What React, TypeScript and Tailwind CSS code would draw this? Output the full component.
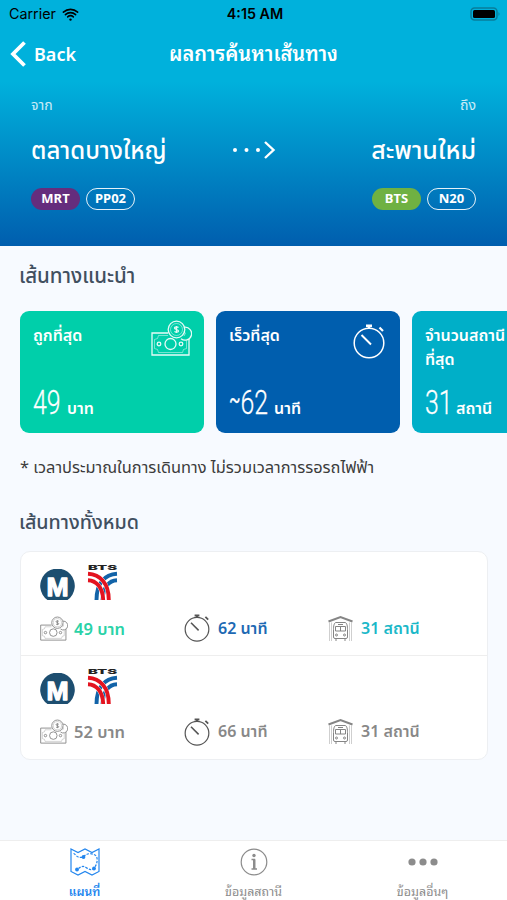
import React from "react";
import { IoWifi } from "react-icons/io5";

type IconProps = { className?: string };

const MoneyIcon = ({ className }: IconProps) => (
    <svg viewBox="0 0 41 36" fill="none" stroke="currentColor" strokeWidth={1.3} className={className}>
        <path d="M17 13H1v22h37V19" />
        <path d="M17 15.500H7.500a4 4 0 0 1-4 4v9a4 4 0 0 1 4 4h24a4 4 0 0 1 4-4v-8" strokeWidth={0.5} />
        <circle cx="19.500" cy="24" r="5.500" />
        <circle cx="8" cy="24" r="1.800" />
        <circle cx="30" cy="24" r="1.800" />
        <circle cx="25.500" cy="9.500" r="8.300" />
        <circle cx="25.500" cy="9.500" r="6" strokeWidth={0.5} />
        <path d="M33.500 7.200a6.500 6.500 0 1 1-3.500 11.500" />
        <path d="M33 11a3.500 3.500 0 0 1 0 5" strokeWidth={0.6} />
        <path d="M27.500 7.500c-1-1-4-1-4 .5s4 1.500 4 3-3 1.600-4 .4M25.500 6v7" />
    </svg>
);

const StopwatchIcon = ({ className }: IconProps) => (
    <svg viewBox="0 0 32 35" fill="none" stroke="currentColor" strokeWidth={1.5} className={className}>
        <circle cx="16" cy="19" r="14.800" />
        <path d="M13 1.800h6M16 1v3.500" strokeWidth={2.600} />
        <path d="m26.500 3.500 3.500 3.500" strokeWidth={2.200} />
        <path d="m8.500 11 9.500 9.500" strokeWidth={1.900} />
    </svg>
);

const StationIcon = ({ className }: IconProps) => (
    <svg viewBox="0 0 25 27" fill="none" stroke="currentColor" strokeWidth={1} className={className}>
        <path d="M0.500 6.500 12.500 2 24.500 6.500" strokeWidth={2} />
        <path d="M1.500 7.500V26M3.500 7.500V26M21.500 7.500V26M23.500 7.500V26" strokeWidth={0.4} />
        <path d="M8 7.500h9c2 0 2.500 4 2.500 7v7.500q0 1.500-1.500 1.500H7q-1.500 0-1.500-1.500v-7.500c0-3 .5-7 2.500-7Z" />
        <path d="M10 9.500h5M7.500 11.500h10V16h-10zM12.500 11.500V16M8 24v2M17 24v2" />
        <circle cx="8.500" cy="20" r="1" />
        <circle cx="16.500" cy="20" r="1" />
    </svg>
);

const MrtLogo = () => (
    <svg viewBox="0 0 35 31" className="w-[35px] h-[31px]">
        <path d="M7.500 31a17.300 17.300 0 1 1 20 0Z" fill="#1d4e70" />
        <text
            x="17.500"
            y="26.500"
            textAnchor="middle"
            fontSize="26.500"
            fontWeight="700"
            fill="#fff"
            stroke="#fff"
            strokeWidth="1.300"
            strokeLinejoin="round"
            fontFamily="Liberation Sans, sans-serif"
        >
            M
        </text>
    </svg>
);

const BtsLogo = () => (
    <svg viewBox="0 0 29 35" fill="none" strokeWidth={3.900} className="w-[29px] h-[35px] overflow-visible">
        <text
            x="0"
            y="5"
            textLength="29"
            lengthAdjust="spacingAndGlyphs"
            fontSize="6.800"
            fontWeight="900"
            fill="#222"
            fontFamily="Inter, sans-serif"
        >
            BTS
        </text>
        <path d="M29 8.800C17 9.500 8.500 18 8.500 35M29 15.200C21 15.500 15 22 14.500 35" stroke="#1263a8" />
        <path d="M0 15.200C8 15.500 14.800 22 15.200 35M0 8.800C12 9.500 20.800 18 20.800 35" stroke="#fff" strokeWidth={4.500} />
        <path d="M0 15.200C8 15.500 14.800 22 15.200 35M0 8.800C12 9.500 20.800 18 20.800 35" stroke="#e3131f" />
    </svg>
);

const MapIcon = () => (
    <svg viewBox="0 0 30 28" fill="none" stroke="currentColor" strokeWidth={1.200} className="w-[30px] h-[28px]">
        <path d="m1 1 7 3.500L15 1l7 3.500L29 1v22.500L22 27l-7-3.500L8 27l-7-3.500Z" />
        <path d="M3.500 5.500c2 0 3 5.500 10 3.500 3-4 8-4 11.500-2s2.500 9-1 13.500c-3 2-5 1-8-1s-5-1-9 2" strokeDasharray="2.500 1.300" />
        <g fill="currentColor" stroke="none">
            <circle cx="13.500" cy="9" r="1.900" />
            <circle cx="7" cy="21.500" r="1.900" />
            <circle cx="24" cy="20.500" r="1.900" />
        </g>
    </svg>
);

const InfoIcon = () => (
    <svg viewBox="0 0 28 28" fill="none" stroke="currentColor" className="w-[28px] h-[28px]">
        <circle cx="14" cy="14" r="12.800" strokeWidth={1.200} />
        <circle cx="14" cy="7.500" r="1.700" fill="currentColor" stroke="none" />
        <path d="M11.500 11.500H14.500V21M11.500 21h5.500" strokeWidth={1.300} />
        <path d="M14.200 11.500V21" strokeWidth={2.400} />
    </svg>
);

const Badge = ({ children, className }: { children: string; className: string }) => (
    <span
        className={`w-[49px] h-[22px] rounded-full flex items-center justify-center text-[13px] font-bold text-white ${className}`}
    >
        {children}
    </span>
);

const Header = () => (
    <header className="h-[246px] bg-[linear-gradient(180deg,#00b1dc_0px,#00b1dc_82px,#005eae_246px)] text-white">
        <div className="h-7 pl-[9px] pr-[6px] grid grid-cols-3 items-center text-black font-['Inter']">
            <div className="flex items-center gap-[5px] text-[14.300px]">
                <span>Carrier</span>
                <IoWifi size={19} />
            </div>
            <span className="text-center text-[14.300px] font-semibold">4:15 AM</span>
            <svg viewBox="0 0 31 14" className="w-[31px] h-[14px] justify-self-end">
                <rect x="1" y="1" width="26" height="12" rx="3.500" fill="none" stroke="#087d9b" strokeWidth="1.500" />
                <rect x="3" y="3" width="22" height="8" rx="1.500" fill="#000" />
                <path d="M28.500 5v4q2-2 0-4" fill="#087d9b" />
            </svg>
        </div>
        <div className="h-[52px] grid grid-cols-[1fr_auto_1fr] items-center">
            <div className="flex items-center gap-2 pl-[10px]">
                <svg viewBox="0 0 16 26" fill="none" stroke="#fff" strokeWidth={3.800} className="w-4 h-[26px]">
                    <path d="M14.500 1.500 3 13l11.500 11.500" />
                </svg>
                <span className="text-[18px] font-semibold">Back</span>
            </div>
            <h1 className="text-[20px] font-semibold whitespace-nowrap font-['Noto_Sans','Noto_Sans_Thai_Looped','Noto_Sans_Thai',sans-serif]">
                ผลการค้นหาเส้นทาง
            </h1>
            <span />
        </div>
        <div className="px-[31px] pt-[14px]">
            <div className="h-5 flex justify-between items-center text-[14px] text-white/80">
                <span>จาก</span>
                <span>ถึง</span>
            </div>
            <div className="h-[72px] grid grid-cols-[1fr_auto_1fr] items-center text-[24px] font-medium">
                <span>ตลาดบางใหญ่</span>
                <svg viewBox="0 0 44 20" className="w-11 h-5" fill="#fff">
                    <circle cx="3" cy="10" r="2" />
                    <circle cx="14.500" cy="10" r="2" />
                    <circle cx="26" cy="10" r="2" />
                    <path d="m33 2 8.500 8-8.500 8" fill="none" stroke="#fff" strokeWidth="2.400" />
                </svg>
                <span className="text-right text-[25px]">สะพานใหม่</span>
            </div>
            <div className="mt-[2px] flex justify-between">
                <div className="flex gap-[6px]">
                    <Badge className="bg-[#652d7d]">MRT</Badge>
                    <Badge className="border border-white/90">PP02</Badge>
                </div>
                <div className="flex gap-[6px]">
                    <Badge className="bg-[#6fb142]">BTS</Badge>
                    <Badge className="border border-white/90">N20</Badge>
                </div>
            </div>
        </div>
    </header>
);

type CardProps = {
    title: React.ReactNode;
    value: string;
    unit: string;
    color: string;
    valueWidth: string;
    approx?: boolean;
    icon?: React.ReactNode;
};

const RouteCard = ({ title, value, unit, color, valueWidth, approx, icon }: CardProps) => (
    <div className={`w-[184px] h-[122px] shrink-0 rounded-[9px] px-[13px] flex flex-col justify-between text-white ${color}`}>
        <div className="h-[62px] flex justify-between items-start pt-[9px]">
            <p className="text-[16px] leading-[24px] font-semibold pt-[3px] whitespace-nowrap">{title}</p>
            {icon}
        </div>
        <div className="flex items-baseline h-[56px]">
            <span className={`shrink-0 whitespace-nowrap ${valueWidth}`}>
                <span className="inline-block origin-left scale-x-[0.73] text-[34px] leading-[50px] font-light font-['Roboto'] [-webkit-text-stroke:0.3px_white]">
                    {approx && <span className="inline-block text-[23px] font-normal -translate-y-[6px]">~</span>}
                    {value}
                </span>
            </span>
            <span className="text-[16px] font-semibold">{unit}</span>
        </div>
    </div>
);

type RowProps = { price: string; time: string; stations: string; colors: string[] };

const RouteRow = ({ price, time, stations, colors }: RowProps) => (
    <div className="h-[103.500px] pt-[13px] px-[19px]">
        <div className="flex items-end gap-[13px] h-[35px]">
            <MrtLogo />
            <BtsLogo />
        </div>
        <div className="mt-[14px] grid grid-cols-[144px_144px_1fr] text-[16px] font-semibold leading-[27px]">
            <div className="flex items-center gap-[6px]">
                <MoneyIcon className="w-[28px] h-[25px] text-[#858585]" />
                <span className={`text-[16.500px] ${colors[0]}`}>{price} บาท</span>
            </div>
            <div className="flex items-center gap-[8px]">
                <StopwatchIcon className="w-[26px] h-[28px] text-[#555]" />
                <span className={colors[1]}>{time} นาที</span>
            </div>
            <div className="flex items-center gap-[8px]">
                <StationIcon className="w-[25px] h-[27px] text-[#858585]" />
                <span className={colors[2]}>{stations} สถานี</span>
            </div>
        </div>
    </div>
);

const TabBar = () => (
    <nav className="h-[60px] border-t border-[#eeeeee] bg-white grid grid-cols-3 text-[12.500px] leading-[18px] text-[#8c8c8c] font-['Noto_Sans','Noto_Sans_Thai_Looped','Noto_Sans_Thai',sans-serif]">
        <div className="flex flex-col items-center pt-[7px] text-[#2386ee]">
            <MapIcon />
            <span className="mt-[7px] text-[12px] font-semibold">แผนที่</span>
        </div>
        <div className="flex flex-col items-center pt-[7px]">
            <InfoIcon />
            <span className="mt-[7px]">ข้อมูลสถานี</span>
        </div>
        <div className="flex flex-col items-center pt-[7px]">
            <svg viewBox="0 0 30 28" fill="currentColor" className="w-[30px] h-[28px]">
                <circle cx="4" cy="14" r="3.600" />
                <circle cx="15" cy="14" r="3.600" />
                <circle cx="26" cy="14" r="3.600" />
            </svg>
            <span className="mt-[7px]">ข้อมูลอื่นๆ</span>
        </div>
    </nav>
);

const App = () => {
    return (
        <div className="w-full h-[900px] flex flex-col overflow-hidden bg-[#f7faff] font-['Noto_Sans','Noto_Sans_Thai',sans-serif]">
            <Header />
            <main className="flex-1 pl-5 overflow-hidden">
                <h2 className="h-[65px] -ml-[1px] pb-[6px] flex items-center text-[20.500px] font-medium text-[#414f5f]">
                    เส้นทางแนะนำ
                </h2>
                <div className="flex gap-3">
                    <RouteCard
                        title="ถูกที่สุด"
                        value="49"
                        unit="บาท"
                        color="bg-[#00cfaa]"
                        valueWidth="w-[34px]"
                        icon={<MoneyIcon className="w-[41px] h-[36px] -mr-[1px] text-white/90" />}
                    />
                    <RouteCard
                        title="เร็วที่สุด"
                        value="62"
                        unit="นาที"
                        color="bg-[#005eae]"
                        valueWidth="w-[45px]"
                        approx
                        icon={<StopwatchIcon className="w-[32px] h-[35px] mt-[4px] mr-[2px]" />}
                    />
                    <RouteCard
                        title={
                            <>
                                จำนวนสถานี
                                <br />
                                ที่สุด
                            </>
                        }
                        value="31"
                        unit="สถานี"
                        color="bg-[#00afc8]"
                        valueWidth="w-[31px]"
                    />
                </div>
                <p className="h-[68px] flex items-center text-[16.400px] text-[#3c3c3c] whitespace-nowrap">
                    * เวลาประมาณในการเดินทาง ไม่รวมเวลาการรอรถไฟฟ้า
                </p>
                <h2 className="h-[50px] -ml-[1px] pb-[9px] flex items-center text-[19.700px] font-medium text-[#414f5f]">
                    เส้นทางทั้งหมด
                </h2>
                <div className="mr-[19px] rounded-[10px] border border-[#edeff2] bg-white divide-y divide-[#eeeeee]">
                    <RouteRow
                        price="49"
                        time="62"
                        stations="31"
                        colors={["text-[#2ad2a7]", "text-[#1d69b3]", "text-[#1ab8c8]"]}
                    />
                    <RouteRow
                        price="52"
                        time="66"
                        stations="31"
                        colors={["text-[#888888]", "text-[#888888]", "text-[#888888]"]}
                    />
                </div>
            </main>
            <TabBar />
        </div>
    );
};

export default App;
